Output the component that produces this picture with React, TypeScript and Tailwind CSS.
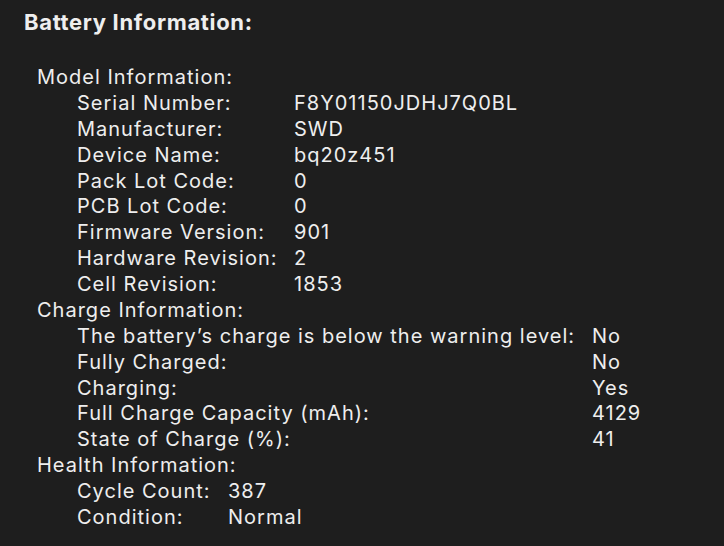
const sections = [
  {
    title: "Model Information:",
    labelWidth: "w-[217px]",
    rows: [
      ["Serial Number:", "F8Y01150JDHJ7Q0BL"],
      ["Manufacturer:", "SWD"],
      ["Device Name:", "bq20z451"],
      ["Pack Lot Code:", "0"],
      ["PCB Lot Code:", "0"],
      ["Firmware Version:", "901"],
      ["Hardware Revision:", "2"],
      ["Cell Revision:", "1853"],
    ],
  },
  {
    title: "Charge Information:",
    labelWidth: "w-[515px]",
    rows: [
      ["The battery\u2019s charge is below the warning level:", "No"],
      ["Fully Charged:", "No"],
      ["Charging:", "Yes"],
      ["Full Charge Capacity (mAh):", "4129"],
      ["State of Charge (%):", "41"],
    ],
  },
  {
    title: "Health Information:",
    labelWidth: "w-[151px]",
    rows: [
      ["Cycle Count:", "387"],
      ["Condition:", "Normal"],
    ],
  },
];

export default function App() {
  return (
    <div className="w-[724px] h-[546px] bg-[#1e1e1e] text-[#eeeeee] font-['Inter',sans-serif] pl-[24px] pt-[9px] overflow-hidden">
      {/* Header */}
      <h1 className="text-[22px] leading-[26px] font-bold tracking-[0.03em]">
        Battery Information:
      </h1>

      <div className="mt-[30px] pl-[13px] text-[20px] leading-[25.88px] tracking-[0.05em]">
        {sections.map((section) => (
          <div key={section.title}>
            <div className="whitespace-nowrap">{section.title}</div>
            <div className="pl-[40px]">
              {section.rows.map(([label, value]) => (
                <div key={label} className="flex whitespace-nowrap">
                  <span className={`${section.labelWidth} shrink-0`}>{label}</span>
                  <span>{value}</span>
                </div>
              ))}
            </div>
          </div>
        ))}
      </div>
    </div>
  );
}
